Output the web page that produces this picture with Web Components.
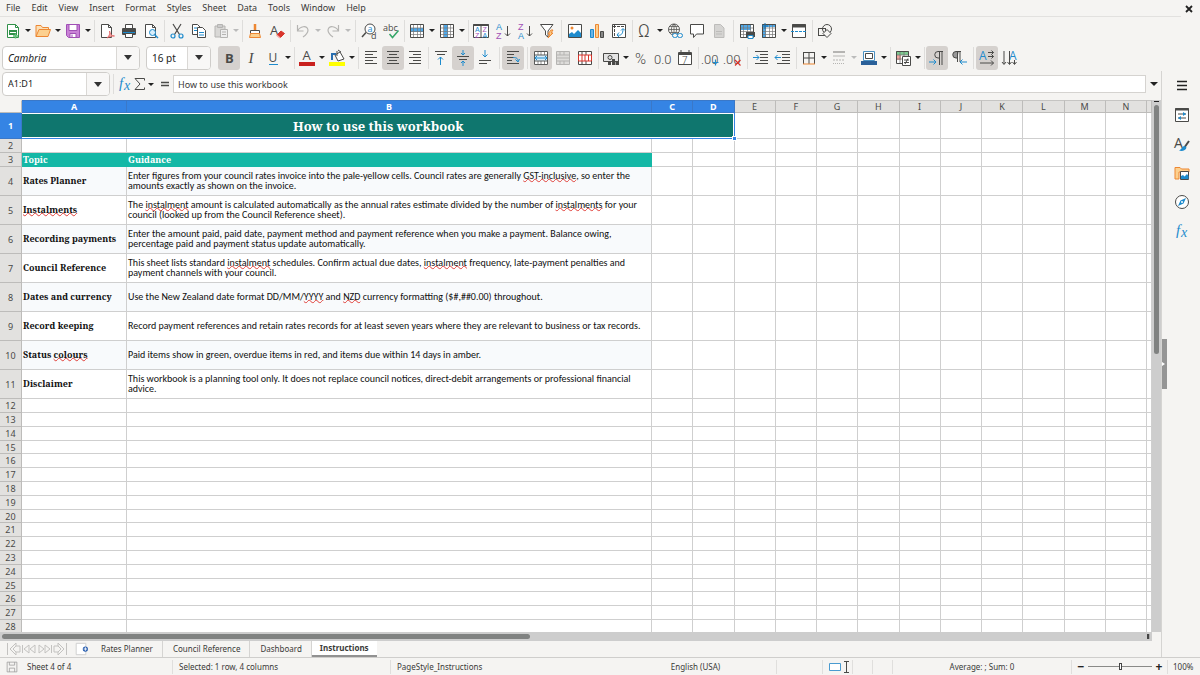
<!DOCTYPE html>
<html lang="en">
<head>
<meta charset="utf-8">
<title>Instructions</title>
<style>
html, body { margin: 0; height: 100%; }
body { background: #f5f4f2; color: #3a3a38; font-family: "Noto Sans", sans-serif; font-size: 9px; line-height: 12px; overflow: hidden; }
</style>
</head>
<body>
<calc-app></calc-app>

<script>
const K = '#4a4a48', B = '#1e8bcd', O = '#ed8733', G = '#309048', R = '#d8352c', P = '#a04fb5';
const st = (c, w = 1) => `fill="none" stroke="${c}" stroke-width="${w}"`;
const tx = (x, y, s, t, c = K, extra = '') => `<text x="${x}" y="${y}" font-size="${s}" fill="${c}" ${extra}>${t}</text>`;
const serif = 'font-style="italic" font-family="Liberation Serif, serif"';
const sans = 'font-family="Liberation Sans, sans-serif"';
const thin = 'font-family="Roboto, sans-serif" font-weight="300"';
const lines = (arr, c = K) => arr.map(([x1, y, x2]) => `<path d="M${x1} ${y}H${x2}" ${st(c)}/>`).join('');
const gridPath = (under = '') => `<path d="M1 1h14v14H1z" fill="#fff"/>${under}<path d="M4.500 2v12M8.500 2v12M11.500 2v12M2 5h12M2 8.500h12M2 11.500h12" ${st('#777', .7)}/><path d="M1.500 1.500h13v13h-13z" ${st(K)}/>`;

const ICONS = {
  'new': `<path d="M2.500 1.500h8l3 3v10h-11z" fill="#fff" stroke="${G}"/><path d="M10.500 1.500v3h3" ${st(G)}/><path d="M4 7h8v5H4z" fill="${G}"/><path d="M5 9.500h6" stroke="#fff"/><path d="M10.500 10.500v5M8 13h5" stroke="#5cbf74" stroke-width="1.500"/>`,
  'open': `<path d="M1 13.500V2.500h5l1.500 2h6v2" fill="#fbdfb5" stroke="${O}"/><path d="M1 13.500l3-7h11.500l-2.500 7z" fill="#fcd08f" stroke="${O}"/>`,
  'save': `<path d="M1.500 1.500h13v13h-11l-2-2z" fill="#c982d6" stroke="${P}"/><path d="M4 1.500h8v6H4z" fill="#fff" stroke="${P}"/><path d="M5 10.500h6v4H5z" fill="#fff" stroke="${P}"/><path d="M7 11.500v3" stroke="${P}"/>`,
  'pdf': `<path d="M2.500 1.500h7l3 3v10h-10z" fill="#fff" stroke="${K}"/><path d="M9.500 1.500v3h3" ${st(K)}/><path d="M8 15c3-3 3-5 2.500-7 .500 3 2 5 5 5-3 0-5 .500-7.500 2z" fill="#f5a8a8" stroke="#e05a5a" stroke-width=".8"/>`,
  'print': `<path d="M4.500 5V1.500h7V5" fill="#fff" stroke="${K}"/><rect x="1" y="5" width="14" height="7" rx="1" fill="${K}"/><path d="M2 9.500h12" stroke="${B}"/><path d="M4.500 10.500h7v4h-7z" fill="#fff" stroke="${K}"/>`,
  'preview': `<path d="M2.500 1.500h7l3 3v10h-10z" fill="#fff" stroke="${K}"/><path d="M9.500 1.500v3h3" ${st(K)}/><circle cx="9.500" cy="9.500" r="3" fill="#d9eefb" stroke="${B}"/><path d="M11.500 11.500l3.500 3.500" ${st(B, 1.5)}/>`,
  'cut': `<path d="M4 1l6.500 10.500M12 1L5.500 11.500" ${st(K, 1.2)}/><circle cx="4" cy="13" r="2" ${st(B, 1.2)}/><circle cx="12" cy="13" r="2" ${st(B, 1.2)}/>`,
  'copy': `<path d="M1.500 1.500h5l3 3v7h-8z" fill="#fff" stroke="${K}"/><path d="M6.500 4.500h5l3 3v7h-8z" fill="#fff" stroke="${K}"/><path d="M3 5h3M3 7.500h3M8 9.500h5M8 12h5" stroke="${B}"/>`,
  'paste': `<path d="M2 3h10v11H2z" fill="#d9d8d6" stroke="#b5b4b2"/><path d="M4.500 1.500h5v3h-5z" fill="#ccc" stroke="#b5b4b2"/><path d="M7.500 6.500h7v8h-7z" fill="#eee" stroke="#b5b4b2"/><path d="M9 9h4M9 11.500h4" stroke="#b5b4b2"/>`,
  'clone': `<path d="M8 1v6" ${st(O, 2.5)}/><path d="M3.500 7.500h9v3h-9z" fill="#fff" stroke="${K}"/><path d="M3.500 10.500l-1 4h11l-1-4z" fill="#fcd08f" stroke="${O}"/>`,
  'clear': tx(1, 12, 13, 'A', K) + `<path d="M8 12l4-4 3.500 2.500-4 4z" fill="${R}" stroke="${R}"/><path d="M7.500 12l3.500 3" stroke="#f5a8a8" stroke-width="1.500"/>`,
  'undo': `<path d="M2.500 2v6h6M2.500 8C5 3 12 2 13 7c0 3-2 5-5 7" ${st('#b5b4b2', 1.2)}/>`,
  'redo': `<path d="M13.500 2v6h-6M13.500 8C11 3 4 2 3 7c0 3 2 5 5 7" ${st('#b5b4b2', 1.2)}/>`,
  'find': `<circle cx="9" cy="6" r="5" fill="#fff" stroke="${K}"/><path d="M5 9.500L1 14" ${st(K, 1.5)}/>` + tx(6.5, 8.5, 9, 'a', B) + tx(10, 15.5, 9, 'd', K),
  'spell': tx(0, 8, 9, 'abc', K) + `<path d="M6.500 11l3 3.500 6-7" ${st('#35a668', 1.5)}/>`,
  'row': gridPath('<path d="M1 5h14v4H1z" fill="#4fa8e8"/>'),
  'col': gridPath('<path d="M5 1h4v14H5z" fill="#4fa8e8"/>'),
  'sort': `<path d="M.500 1.500h15v13h-15zM8 1.500v13" fill="#fff" stroke="${K}"/><path d="M.500 2h15" stroke="${K}" stroke-width="2"/>` + tx(2, 9, 7, 'A', B, sans) + tx(2, 14.5, 7, 'Z', P, sans) + tx(9.5, 9, 7, 'Z', P, sans) + tx(9.5, 14.5, 7, 'A', B, sans),
  'asc': tx(1, 7, 9, 'A', B, sans) + tx(1, 15.5, 9, 'Z', P, sans) + `<path d="M12.500 3v10M10 10.500l2.500 2.500 2.500-2.500" ${st(K)}/>`,
  'desc': tx(1, 7, 9, 'Z', P, sans) + tx(1, 15.5, 9, 'A', B, sans) + `<path d="M12.500 3v10M10 10.500l2.500 2.500 2.500-2.500" ${st(K)}/>`,
  'filter': `<path d="M1.500 1.500h12.500l-5 6.500v6l-2.500-2V8z" fill="#fff" stroke="${K}"/><path d="M12 7l-3 4h2l-2 4 5-5h-2l2-3z" fill="#fcd08f" stroke="${O}"/>`,
  'image': `<path d="M1.500 1.500h13v13h-13z" fill="#fff" stroke="${K}"/><circle cx="5" cy="5" r="1.500" fill="${O}"/><path d="M2 14v-3l3-2 2 2 4-4 3 3v4z" fill="${B}"/>`,
  'chart': `<path d="M1.500 6.500h3v8h-3z" fill="#6bb4e6" stroke="${B}"/><path d="M6.500 1.500h3v13h-3z" fill="#fcd08f" stroke="${O}"/><path d="M11.500 8.500h3v6h-3z" fill="#888" stroke="${K}"/>`,
  'pivot': `<path d="M1.500 1.500h13v13h-13z" fill="#fff" stroke="${K}"/><path d="M2 3.500h12M3.500 2v12" stroke="${K}" stroke-dasharray="3 1"/><path d="M6 12c4 1 6-1 6-6M10 7.500L12 5.500l2 2M8 9.500L6 12l2 2" ${st(B)}/>`,
  'omega': tx(1, 14, 18, 'Ω', K, thin),
  'link': `<circle cx="7" cy="6.500" r="5.500" ${st(K, .9)}/><path d="M1.500 6.500h11M7 1v11M2.500 3.500h9M2.500 9.500h9M7 1C3.500 4 3.500 9 7 12M7 1c3.500 3 3.500 8 0 11" ${st(K, .7)}/><rect x="5.500" y="10.500" width="5" height="4" rx="2" fill="#f5f4f2" stroke="${B}"/><rect x="10.500" y="10.500" width="5" height="4" rx="2" fill="#f5f4f2" stroke="${B}"/>`,
  'comment': `<path d="M1.500 1.500h13v9.500H7.500l-3 3.500V11h-3z" fill="#fff" stroke="${K}"/>`,
  'header': `<path d="M3.500 1.500h6l3.500 3.500v9.500H3.500z" fill="#d5d4d2" stroke="#bdbcba"/><path d="M5 8.500h6M5 11h6" stroke="#bdbcba"/>`,
  'printarea': gridPath('<path d="M1 1h11v6H1z" fill="#4fa8e8"/>') + `<path d="M7 9h9v5H7z" fill="${K}"/><path d="M9 12.500h5v3H9z" fill="#fff" stroke="${B}"/>`,
  'freeze': gridPath('<path d="M1 1h4v14H1zM1 1h14v3H1z" fill="#4fa8e8"/>') + `<path d="M1 3h6M4 0v6" stroke="#1470b0"/>`,
  'split': `<path d="M1.500 1.500h13v13h-13z" fill="#fff" stroke="${K}"/><path d="M1 3h14" stroke="${K}" stroke-width="3"/><path d="M0 8.500h16" stroke="${B}" stroke-dasharray="3 1"/>`,
  'shapes': `<rect x="1.500" y="5.500" width="7" height="7" ${st(K)}/><circle cx="10" cy="6" r="4.500" ${st(K)}/><path d="M10 6.500l4 4-4 4-4-4z" fill="#f5f4f2" stroke="${K}"/>`,
  'bold': tx(4, 13, 13, 'B', K, 'font-weight="700"'),
  'italic': tx(5.5, 13, 15, 'I', K, serif),
  'underline': tx(3.5, 12, 12, 'U', K) + `<path d="M4 14.500h9" stroke="${B}"/>`,
  'fontcolor': tx(3.5, 10, 13, 'A', K) + `<path d="M0 12h16v4H0z" fill="#c9211e"/>`,
  'highlight': `<path d="M0 12h16v4H0z" fill="#ff0"/><path d="M6 5l5-3 4 7-6 2z" fill="#fff" stroke="${K}"/><path d="M8 1v5M12 2l-3-2" ${st(K)}/><path d="M3 10V4h4" ${st('#2a6fb0', 2)}/>`,
  'left': lines([[2, 1.5, 14], [2, 4.5, 10], [2, 7.5, 14], [2, 10.5, 10], [2, 13.5, 14]]),
  'center': lines([[2, 1.5, 14], [4, 4.5, 12], [2, 7.5, 14], [4, 10.5, 12], [2, 13.5, 14]]),
  'right': lines([[2, 1.5, 14], [6, 4.5, 14], [2, 7.5, 14], [6, 10.5, 14], [2, 13.5, 14]]),
  'top': lines([[2, 1.5, 14], [4, 4.5, 12]]) + `<path d="M7.500 15V7M5 9.500L7.500 7 10 9.500" ${st(B)}/>`,
  'middle': lines([[2, 6.5, 14], [4, 9.5, 12]]) + `<path d="M8 0v5M6 3l2 2 2-2M8 16v-5M6 13l2-2 2 2" ${st(B)}/>`,
  'bottom': lines([[2, 10.5, 14], [2, 13.5, 10]]) + `<path d="M8 0v7M5.500 4.500L8 7l2.500-2.500" ${st(B)}/>`,
  'wrap': lines([[2, 1.5, 14], [2, 4.5, 9], [2, 7.5, 9], [2, 10.5, 7], [2, 13.5, 14]]) + `<path d="M8 7.500c4 0 5 1 5 4M10.500 9.500l2.500 2.500 1.500-3" ${st(B)}/>`,
  'merge': `<path d="M1 1h14v14H1z" fill="#fff"/><path d="M1 5h14v6H1z" fill="#d9eefb"/><path d="M5 2v3M8 2v3M11.500 2v3M5 11v3M8 11v3M11.500 11v3" ${st('#777', .8)}/><path d="M1.500 1.500h13v13h-13zM1.500 5h13M1.500 11h13" ${st(K, .9)}/><path d="M2 8h12M4 6L2 8l2 2M12 6l2 2-2 2" ${st(B)}/>`,
  'mergecells': `<path d="M1.500 1.500h13v13h-13zM5 1.500V5M9 1.500V5M5 11v3.500M9 11v3.500M1.500 5h13M1.500 8h13M1.500 11h13" fill="#dddcda" stroke="#b5b4b2"/>`,
  'unmerge': `<path d="M1.500 1.500h13v13h-13zM5 1.500V5M9 1.500V5M5 11v3.500M9 11v3.500" fill="#fff" stroke="${K}"/><path d="M1.500 5h13v6h-13zM5 5v6M8 5v6M11.500 5v6" fill="#fff" stroke="${R}"/>`,
  'currency': `<path d="M.500 3.500h15v8H.500z" fill="#e4e4e4" stroke="${K}"/><circle cx="7" cy="7.500" r="2" ${st(K)}/><path d="M5 11h3v4H5zM9 9h3v6H9zM12.500 11H16v4h-3.500z" fill="${K}"/>`,
  'percent': tx(2, 13.5, 15, '%', K, thin),
  'number': tx(-1, 13.5, 13, '0.0', K, thin),
  'date': `<path d="M1.500 2.500h13v12h-13z" fill="#fff" stroke="${K}"/><path d="M1 4h14" stroke="${K}" stroke-width="2"/><path d="M4 0v3M12 0v3" stroke="${K}"/>` + tx(5, 13.5, 10, '7', K, thin),
  'adddec': tx(-2, 13.5, 13, '.00', K, thin) + `<path d="M12.500 9.500v6M9.500 12.500h6" ${st(B, 1.2)}/>`,
  'deldec': tx(-2, 13.5, 13, '.00', K, thin) + `<path d="M10 10l5.500 5.500M15.500 10L10 15.500" ${st(R, 1.2)}/>`,
  'indent': lines([[2, 1.5, 15], [7, 4.5, 15], [7, 7.5, 15], [7, 10.5, 15], [2, 13.5, 15]]) + `<path d="M0 7.500h6M3.500 5L6 7.500 3.500 10" ${st(B)}/>`,
  'outdent': lines([[2, 1.5, 15], [7, 4.5, 15], [7, 7.5, 15], [7, 10.5, 15], [2, 13.5, 15]]) + `<path d="M0 7.500h6M2.500 5L0 7.500 2.500 10" ${st(B)}/>`,
  'borders': `<path d="M2.500 2v12M8 2v12M13.500 2v12M2 2.500h12M2 8h12" ${st(K)}/><path d="M2 14h12" stroke="${O}"/>`,
  'borderstyle': `<path d="M2 2h12" stroke="#b5b4b2" stroke-width="2"/><path d="M2 6h12" stroke="#b5b4b2"/><path d="M2 10h12" stroke="#b5b4b2" stroke-dasharray="2 1"/><path d="M2 13.500h12" stroke="#b5b4b2" stroke-dasharray="1 1"/>`,
  'bordercolor': `<path d="M2.500 1.500h11v9h-11z" fill="#fff" stroke="#4a90c2"/><path d="M4.500 3.500h7v5h-7z" ${st(K)}/><path d="M0 11h16v4H0z" fill="#2a6099"/>`,
  'cond': `<path d="M1 1h13v13H1z" fill="#fff"/><path d="M1 1h13v4H1z" fill="#7cc98f"/><path d="M1 5h5v5H1z" fill="#f3a49d"/><path d="M5 1.500v12M9 1.500v12M1.500 5h12M1.500 9h12" ${st('#777', .8)}/><path d="M1.500 1.500h12v12h-12z" ${st(K)}/><path d="M7.500 6.500h8v9h-8z" fill="#fff" stroke="${K}"/><path d="M9 10h5M9 12.500h5M13 8.500l-3 5.500" ${st(K)}/>`,
  'ltr': `<path d="M14 1.500H9a3 3 0 0 0 0 6.500h1M10.500 1.500V15M13 1.500V15" ${st(K)}/><path d="M0 12h7M4.500 9.500L7 12l-2.500 2.500" ${st(B)}/>`,
  'rtl': `<path d="M8 1.500H5a3 3 0 0 0 0 6.500h1z" fill="#999"/><path d="M10 1.500H5a3 3 0 0 0 0 6.500h1M6.500 1.500V12M9 1.500V12" ${st(K)}/><path d="M16 12H9M11.500 9.500L9 12l2.500 2.500" ${st(B)}/>`,
  'dirh': tx(0, 9.5, 12, 'A', B) + `<path d="M9 2.500h5.500M9 6.500h5.500M12.500 .500l2 2-2 2M12.500 4.500l2 2-2 2M1 13h13.500M12 10.500l2.500 2.500-2.500 2.500" ${st(K)}/>`,
  'dirv': tx(8, 9.5, 12, 'A', B) + `<path d="M3 1v13M1 12l2 2.500L5 12M8.500 1v13M6.500 12l2 2.500 2-2.500M13.500 10v4M11.500 12l2 2.500 2-2.500" ${st(K)}/>`,
  'fx': tx(2, 12, 15, 'f', B, serif) + tx(7, 14, 14, 'x', B, serif),
  'sum': `<path d="M12.500 4.500V2.500H3L8 8l-5 5.500h9.500v-2" ${st(K)}/>`,
  'equals': `<path d="M4 6.500h8M4 9.500h8" ${st(K, 1.5)}/>`,
  'menu': `<path d="M3 3.500h10M3 7.500h10M3 11.500h10" ${st('#222', 1.3)}/>`,
  'properties': `<path d="M1.500 1.500h13v13h-13z" fill="#fff" stroke="${K}"/><path d="M1 2.500h14" stroke="${K}" stroke-width="2"/><path d="M4 7h8M4 11h8" stroke="${K}"/><path d="M9 5l3 2-3 2M7 9l-3 2 3 2" fill="${B}"/>`,
  'styles': tx(0, 12, 14, 'A', K) + `<path d="M15 5l-5 7" ${st(K, 2)}/><path d="M11 10c-3 0-3 3-6 4.500 3 1 7 0 7.500-3z" fill="${B}"/>`,
  'gallery': `<path d="M1 14V2.500h5l1.500 1.500H15V7H5v7z" fill="#fcd08f" stroke="${O}"/><path d="M6.500 6.500h8v8h-8z" fill="#fff" stroke="${K}"/><path d="M7 14v-3l2-1 1.500 1.500L13 9l1.500 2v3z" fill="${B}"/>`,
  'navigator': `<circle cx="8" cy="8" r="6.500" fill="#fff" stroke="${K}"/><path d="M12 4l-2.500 5.500L4 12l2.500-5.500z" fill="${B}"/><circle cx="8" cy="8" r="1" fill="#fff"/>`,
  'floppy': `<path d="M1.500 1.500h13v13h-13zM4.500 1.500v4h7v-4M4.500 14.500v-5h7v5" ${st('#999')}/>`,
  'close': `<path d="M5 5l6 6M11 5l-6 6" ${st('#222', 1.8)}/>`,
  'first': `<path d="M2.500 2v12M11 2L5 8l6 6M11 5L8 8l3 3M11 2v3h4v6h-4v3" ${st('#c3c2c0')}/>`,
  'prev': `<path d="M8 4L3 8l5 4zM14 4L9 8l5 4zM1.500 4v8" ${st('#c3c2c0')}/>`,
  'next': `<path d="M8 4l5 4-5 4zM2 4l5 4-5 4zM14.500 4v8" ${st('#c3c2c0')}/>`,
  'last': `<path d="M13.500 2v12M5 2l6 6-6 6M5 5l3 3-3 3M5 2v3H1v6h4v3" ${st('#c3c2c0')}/>`,
  'addsheet': `<path d="M2.500 1.500h11v13h-11z" fill="#fff" stroke="#ccc"/><circle cx="13" cy="8" r="3" fill="#2a5fb0"/><path d="M11 8h4M13 6v4" stroke="#fff"/>`,
  'selmode': `<path d="M.500 4.500h11v7h-11z" fill="#fff" stroke="#4a9bd0"/><path d="M15 2.500h5M17.500 2.500v11M15 13.500h5" ${st(K)}/>`,
};

const define = (name, render) => customElements.define(name, class extends HTMLElement {
  connectedCallback() {
    if (this.shadowRoot) return;
    this.attachShadow({ mode: 'open' }).innerHTML = render(this);
  }
});

define('calc-icon', el => `
  <style>
    :host { display: block; width: 16px; height: 16px; flex: none; }
    svg { display: block; width: 100%; height: 100%; overflow: visible; font-family: "Open Sans", sans-serif; }
  </style>
  <svg viewBox="0 0 16 16" aria-hidden="true">${ICONS[el.getAttribute('name')] || ''}</svg>`);

define('tool-button', el => `
  <style>
    :host { display: flex; flex: none; height: 24px; }
    button { border: 0; padding: 0; margin: 0; background: none; display: grid; place-items: center; width: var(--button-width, 22px); border-radius: 3px; }
    button.on { background: #d5d1ce; }
    button.drop { width: 8px; }
    button.drop::before { content: ""; border: 3px solid transparent; border-top: 3px solid #222; border-bottom: 0; }
    :host([muted]) button.drop::before { border-top-color: #bbb; }
  </style>
  <button type="button" class="${el.hasAttribute('on') ? 'on' : ''}" aria-label="${el.getAttribute('icon')}"><calc-icon name="${el.getAttribute('icon')}"></calc-icon></button>
  ${el.hasAttribute('menu') ? `<button type="button" class="drop" aria-label="${el.getAttribute('icon')} options"></button>` : ''}`);

define('tool-bar', () => `
  <style>
    :host { display: flex; align-items: center; height: 27px; padding-left: 2px; }
    ::slotted(hr) { border: 0; margin: 0; width: 4px; height: 22px; flex: none; background: linear-gradient(#dedddb, #dedddb) center / 1px 100% no-repeat; }
    ::slotted(hr.wide) { width: 6px; }
  </style>
  <slot></slot>`);

define('combo-box', el => `
  <style>
    :host { display: flex; box-sizing: border-box; height: 24px; flex: none; border: 1px solid #cfcdca; border-radius: 4px; background: #fff; overflow: hidden; }
    input { flex: 1; min-width: 0; border: 0; outline: 0; padding: 0 0 0 5px; background: none; font: inherit; color: #222; }
    button { border: 0; border-left: 1px solid #dad8d5; width: 23px; padding: 0; background: #f8f7f6; display: grid; place-items: center; }
    button::before { content: ""; border: 4px solid transparent; border-top: 5px solid #333; border-bottom: 0; }
  </style>
  <input type="text" aria-label="${el.getAttribute('label')}" value="${el.getAttribute('value')}">
  <button type="button" aria-label="${el.getAttribute('label')} list"></button>`);

define('menu-bar', () => `
  <style>
    :host { display: flex; align-items: center; height: 17px; }
    nav { display: flex; gap: 11px; padding-left: 6px; flex: 1; align-self: stretch; align-items: center; border-bottom: 1px solid #e2e1df; }
    button { border: 0; padding: 0; background: none; font: inherit; color: inherit; }
    .close { margin-right: 3px; flex: none; }
  </style>
  <nav>${['File', 'Edit', 'View', 'Insert', 'Format', 'Styles', 'Sheet', 'Data', 'Tools', 'Window', 'Help'].map(t => `<button type="button">${t}</button>`).join('')}</nav>
  <button type="button" class="close" aria-label="Close"><calc-icon name="close"></calc-icon></button>`);

define('formula-bar', () => `
  <style>
    :host { display: flex; align-items: center; height: 29px; padding: 0 0 3px 2px; box-sizing: border-box; }
    combo-box { width: 108px; }
    hr { width: 1px; height: 20px; border: 0; margin: 0 3px; background: #dedddb; }
    .tools { display: flex; align-items: center; width: 56px; flex: none; --button-width: 15px; }
    .tools calc-icon { margin-left: 2px; }
    label { flex: 1; display: flex; }
    input { flex: 1; min-width: 0; height: 18px; box-sizing: border-box; border: 1px solid #d5d3d0; padding: 0 4px; font: inherit; color: #3a3a38; background: #fff; outline: 0; }
    .expand { width: 15px; height: 20px; border: 0; padding: 0; background: none; display: grid; place-items: center; }
    .expand::before { content: ""; border: 4px solid transparent; border-top: 4px solid #222; border-bottom: 0; }
  </style>
  <combo-box label="Name Box" value="A1:D1"></combo-box><hr>
  <div class="tools"><tool-button icon="fx"></tool-button><tool-button icon="sum" menu></tool-button><calc-icon name="equals"></calc-icon></div>
  <label><input type="text" aria-label="Formula" value="How to use this workbook"></label>
  <button type="button" class="expand" aria-label="Expand formula bar"></button>`);

const sp = t => `<u>${t}</u>`;
const ROWS = [
  ['Rates Planner', `Enter figures from your council rates invoice into the pale-yellow cells. Council rates are generally ${sp('GST-inclusive')}, so enter the<br>amounts exactly as shown on the invoice.`],
  [sp('Instalments'), `The ${sp('instalment')} amount is calculated automatically as the annual rates estimate divided by the number of ${sp('instalments')} for your<br>council (looked up from the Council Reference sheet).`],
  ['Recording payments', 'Enter the amount paid, paid date, payment method and payment reference when you make a payment. Balance owing,<br>percentage paid and payment status update automatically.'],
  ['Council Reference', `This sheet lists standard ${sp('instalment')} schedules. Confirm actual due dates, ${sp('instalment')} frequency, late-payment penalties and<br>payment channels with your council.`],
  ['Dates and currency', `Use the New Zealand date format DD/MM/${sp('YYYY')} and ${sp('NZD')} currency formatting ($#,##0.00) throughout.`],
  ['Record keeping', 'Record payment references and retain rates records for at least seven years where they are relevant to business or tax records.'],
  [`Status ${sp('colours')}`, 'Paid items show in green, overdue items in red, and items due within 14 days in amber.'],
  ['Disclaimer', 'This workbook is a planning tool only. It does not replace council notices, direct-debit arrangements or professional financial<br>advice.'],
];
const blanks = n => '<td></td>'.repeat(n);

define('sheet-grid', () => `
  <style>
    :host { display: block; overflow: hidden; background: #fff; --heading-font: "Noto Serif", "DejaVu Serif Condensed", "Liberation Serif", serif; --body-font: Carlito, Lato, sans-serif; }
    table { border-collapse: separate; border-spacing: 0; table-layout: fixed; width: 100%; }
    .h { width: 22px } .a { width: 105px } .b { width: 525px } .z { width: 5px }
    th, td { box-sizing: border-box; padding: 0; border: solid #cfcfcf; border-width: 0 1px 1px 0; white-space: nowrap; }
    th { background: #e2e1df; font-weight: 400; color: #4a4a48; text-align: center; line-height: 11px; border-color: #bdbcba; }
    thead th { height: 13px; border-top: 1px solid #c5c4c2; }
    thead th:first-child { background: #f5f4f2; border-top-color: #f5f4f2; }
    thead th.sel, th.sel { background: #3584e4; color: #fff; font-weight: 700; border-color: #3a78c8; }
    tbody tr { height: 14px; }
    tbody tr.title { height: 26px; }
    tbody tr.item { height: 29px; }
    tbody tr.blank:nth-child(5n) { height: 13px; }
    .title .merged { position: relative; background: #0f766e; color: #fff; text-align: center; font: 700 13px/18px var(--heading-font); border: 0; box-shadow: inset -1px -1px #3584e4, inset -2px -2px #fff, inset 0 1px #fff; }
    .merged i { position: absolute; right: -2px; bottom: -2px; width: 3px; height: 3px; background: #3584e4; border: 1px solid #fff; }
    .head .fill { background: #14b8a6; color: #fff; border-color: #14b8a6; font: 700 9px/12px var(--heading-font); padding-left: 1px; }
    .topic { font: 700 9px/12px var(--heading-font); color: #111; padding-left: 1px; }
    .text { font: 10px/10px var(--body-font); color: #111; padding: 0 0 1px 1px; }
    .item:nth-child(even) .topic, .item:nth-child(even) .text { background: #f8fafc; }
    u { text-decoration: underline wavy #e0403a 1px; text-underline-offset: -1px; text-decoration-skip-ink: none; }
  </style>
  <table>
    <colgroup><col class="h"><col class="a"><col class="b">${'<col>'.repeat(12)}<col class="z"></colgroup>
    <thead><tr><th></th>${[...'ABCDEFGHIJKLMN'].map((c, i) => `<th scope="col" class="${i < 4 ? 'sel' : ''}">${c}</th>`).join('')}<th></th></tr></thead>
    <tbody>
      <tr class="title"><th scope="row" class="sel">1</th><td class="merged" colspan="4">How to use this workbook<i></i></td>${blanks(11)}</tr>
      <tr><th scope="row">2</th>${blanks(15)}</tr>
      <tr class="head"><th scope="row">3</th><td class="fill">Topic</td><td class="fill">Guidance</td>${blanks(13)}</tr>
      ${ROWS.map(([a, b], i) => `<tr class="item"><th scope="row">${i + 4}</th><td class="topic">${a}</td><td class="text">${b}</td>${blanks(13)}</tr>`).join('')}
      ${Array.from({ length: 17 }, (_, i) => `<tr class="blank"><th scope="row">${i + 12}</th>${blanks(15)}</tr>`).join('')}
    </tbody>
  </table>`);

define('scroll-track', () => `
  <style>
    :host { display: flex; background: #cdcdcd; box-sizing: border-box; padding: 2px; justify-content: space-between; }
    :host([vertical]) { flex-direction: column; padding-top: 1px; }
    .thumb { background: #808281; border-radius: 3px; flex: 0 0 46%; }
    :host([vertical]) .thumb { order: 1; flex-basis: 47%; margin: 3px 0 auto; }
    .tick { width: 2px; background: #444; border-right: 1px solid #aaa; }
    :host([vertical]) .tick { width: auto; height: 1px; border: 0; background: #222; }
  </style>
  <div class="thumb"></div><div class="tick"></div>`);

define('sheet-tabs', () => `
  <style>
    :host { display: flex; align-items: stretch; height: 16px; padding-left: 5px; font-size: 8px; }
    .nav { display: flex; width: 68px; flex: none; }
    .nav button { width: 16px; }
    button { border: 0; padding: 0; background: none; font: inherit; color: inherit; display: grid; place-items: center; }
    .add { width: 16px; }
    .add calc-icon { width: 14px; height: 14px; }
    .tabs { display: flex; align-items: stretch; margin-left: 2px; }
    .tabs button { padding: 0 9px 0 10px; border-right: 1px solid #d5d4d2; }
    .tabs button[aria-selected=true] { background: #fff; font-weight: 700; padding: 0 8px; border: 0; border-bottom: 2px solid #919191; }
  </style>
  <div class="nav">${['first', 'prev', 'next', 'last'].map(n => `<button type="button" aria-label="${n} sheet"><calc-icon name="${n}"></calc-icon></button>`).join('')}</div>
  <button type="button" class="add" aria-label="Add sheet"><calc-icon name="addsheet"></calc-icon></button>
  <div class="tabs" role="tablist">${['Rates Planner', 'Council Reference', 'Dashboard', 'Instructions'].map((t, i) => `<button type="button" role="tab" aria-selected="${i === 3}">${t}</button>`).join('')}</div>`);

define('side-bar', () => `
  <style>
    :host { display: flex; width: 39px; flex: none; box-sizing: border-box; border-left: 1px solid #d5d4d2; align-items: stretch; }
    .grip { align-self: center; width: 5px; height: 50px; border: 0; padding: 0; background: #959595; display: grid; place-items: center start; }
    .grip::before { content: ""; border: 2px solid transparent; border-left: 3px solid #fff; border-right: 0; }
    nav { flex: 1; display: flex; flex-direction: column; align-items: center; gap: 5px; padding-top: 3px; margin-right: 4px; }
  </style>
  <button type="button" class="grip" aria-label="Collapse sidebar"></button>
  <nav>${['menu', 'properties', 'styles', 'gallery', 'navigator', 'fx'].map(n => `<tool-button icon="${n}"></tool-button>`).join('')}</nav>`);

define('status-bar', () => `
  <style>
    :host { display: grid; grid-template-columns: 173fr 218fr 224fr 162fr 46fr 30fr 20fr 20fr 179fr 96fr 32fr; align-items: center; height: 18px; box-sizing: border-box; border-top: 1px solid #cfcecc; white-space: nowrap; font-size: 8px; }
    div { display: flex; align-items: center; height: 14px; min-width: 0; padding-left: 6px; border-right: 1px solid #e0dfdd; box-sizing: border-box; }
    div.mid { justify-content: center; padding: 0; }
    div.plain { border-color: transparent; }
    div.file { gap: 9px; }
    .file calc-icon { width: 12px; height: 12px; }
    div.end { border: 0; padding-left: 5px; }
    button { border: 0; padding: 0; width: 8px; background: none; font: 700 12px/12px "Noto Sans", sans-serif; color: #222; }
    div.zoom { gap: 3px; padding: 0 4px 0 5px; }
    input { appearance: none; flex: 1; min-width: 0; height: 12px; margin: 0; background: linear-gradient(#8a8a88, #8a8a88) center / 100% 1px no-repeat; }
    input::-webkit-slider-thumb { appearance: none; width: 3px; height: 7px; box-sizing: border-box; border: 1px solid #444; background: #fff; }
  </style>
  <div class="file"><calc-icon name="floppy"></calc-icon>Sheet 4 of 4</div>
  <div>Selected: 1 row, 4 columns</div>
  <div class="plain">PageStyle_Instructions</div>
  <div class="mid">English (USA)</div>
  <div></div>
  <div><calc-icon name="selmode"></calc-icon></div>
  <div></div><div></div>
  <div class="mid">Average: ; Sum: 0</div>
  <div class="zoom"><button type="button" aria-label="Zoom out">−</button><input type="range" min="0" max="100" value="50" aria-label="Zoom"><button type="button" aria-label="Zoom in">+</button></div>
  <div class="end">100%</div>`);

// Toolbar shorthand: "v" adds a drop-down, "*" marks the pressed state, "~" greys the drop-down.
const bar = spec => spec.split(' ').map(s => {
  if (s === '|') return '<hr>';
  if (s === '||') return '<hr class="wide">';
  const [name, flags = ''] = s.split(':');
  return `<tool-button icon="${name}"${flags.includes('v') ? ' menu' : ''}${flags.includes('*') ? ' on' : ''}${flags.includes('~') ? ' muted' : ''}></tool-button>`;
}).join('');

define('calc-app', () => `
  <style>
    :host { display: flex; flex-direction: column; height: 100vh; }
    .name, .size { font-size: 10px; }
    .name { width: 138px; font-style: italic; margin-right: 6px; }
    .size { width: 65px; margin-right: 7px; }
    main { flex: 1; min-height: 0; display: flex; }
    .work { flex: 1; min-width: 0; display: flex; flex-direction: column; }
    .view { flex: 1; min-height: 0; display: grid; grid-template: minmax(0, 1fr) 9px / minmax(0, 1fr) 9px; }
  </style>
  <menu-bar></menu-bar>
  <tool-bar>${bar('new:v open:v save:v | pdf print preview | cut copy paste:v~ | clone clear | undo:v~ redo:v~ || find spell | row:v col:v | sort asc desc filter || image chart pivot | omega:v link comment header || printarea freeze:v split | shapes')}</tool-bar>
  <tool-bar><combo-box class="name" label="Font Name" value="Cambria"></combo-box><combo-box class="size" label="Font Size" value="16 pt"></combo-box>${bar('bold:* italic underline:v | fontcolor:v highlight:v | left center:* right | top middle:* bottom || wrap:* || merge:* mergecells unmerge | currency:v percent number date | adddec deldec || indent outdent | borders:v borderstyle:v~ bordercolor:v | cond:v | ltr:* rtl || dirh:* dirv')}</tool-bar>
  <main>
    <div class="work">
      <formula-bar></formula-bar>
      <div class="view"><sheet-grid></sheet-grid><scroll-track vertical></scroll-track><scroll-track></scroll-track></div>
      <sheet-tabs></sheet-tabs>
    </div>
    <side-bar></side-bar>
  </main>
  <status-bar></status-bar>`);
</script>
</body>
</html>
